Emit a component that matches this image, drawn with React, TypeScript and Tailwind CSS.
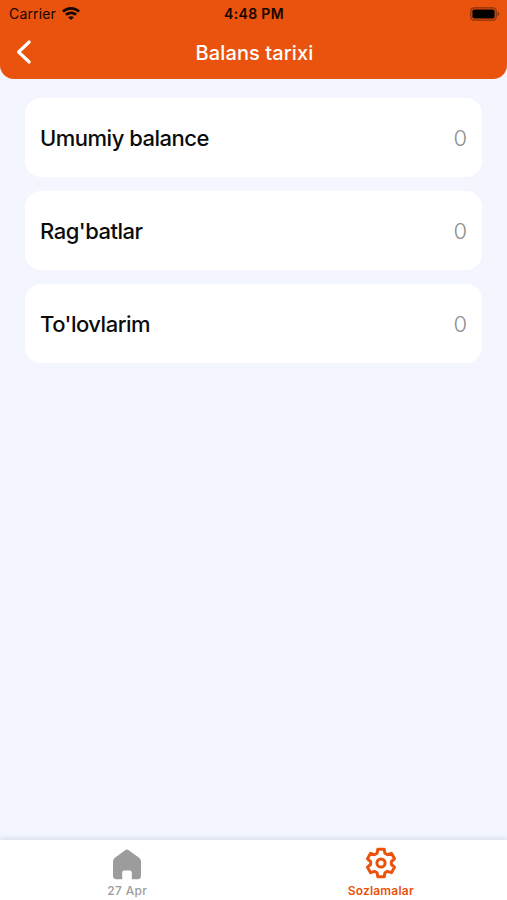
const balanceRows = [
  { id: "total", label: "Umumiy balance", amount: 0 },
  { id: "bonus", label: "Rag'batlar", amount: 0 },
  { id: "payments", label: "To'lovlarim", amount: 0 },
];

function WifiIcon() {
  return (
    <svg width="18" height="14" viewBox="0 0 18 14" fill="none" stroke="#160600" strokeWidth="2.6">
      <path d="M.9 4.6C5.6.3 12.4.3 17.1 4.6" />
      <path d="M3.900 7.800c2.900-2.600 7.300-2.600 10.200 0" />
      <path d="M9 13 6.200 10.300c1.600-1.400 4-1.400 5.600 0z" fill="#160600" stroke="none" />
    </svg>
  );
}

function BatteryIcon() {
  return (
    <svg width="30" height="14" viewBox="0 0 30 14">
      <rect x="0.8" y="0.8" width="25.4" height="12.4" rx="3.5" fill="none" stroke="#87320a" strokeWidth="1.3" />
      <rect x="2.4" y="2.4" width="22.2" height="9.2" rx="1.8" fill="#000" />
      <path d="M27.6 4.8c2.3.6 2.3 3.8 0 4.4z" fill="#87320a" />
    </svg>
  );
}

function HomeIcon() {
  return (
    <svg width="30" height="31" viewBox="0 0 30 31" fill="#9c9c9c">
      <path d="M13.2 1.2q1.8-1.3 3.6 0l10.3 7.6q1.9 1.4 1.9 3.7v14.3q0 3.4-3.4 3.4h-5.8v-6.6q0-2-2-2h-5.6q-2 0-2 2v6.6H4.4Q1 30.2 1 26.8V12.5q0-2.3 1.9-3.7z" />
    </svg>
  );
}

function SettingsIcon() {
  return (
    <svg width="32" height="32" viewBox="-16 -16 32 32" fill="none" stroke="currentColor" strokeWidth="3" strokeLinejoin="round">
      <path d="M-3.2-13.8H3.2L3.9-9.8 6.500-8.300 10.400-9.700 13.500-4.200 10.400-1.500V1.500L13.500 4.200 10.400 9.700 6.500 8.300 3.900 9.800 3.200 13.800H-3.200L-3.900 9.800-6.500 8.300-10.400 9.700-13.500 4.200-10.400 1.500V-1.500L-13.500-4.200-10.400-9.700-6.500-8.300-3.900-9.800Z" />
      <circle r="4.1" />
    </svg>
  );
}

function Header() {
  return (
    <header className="h-[79px] rounded-b-[14px] bg-[#e9530d]">
      {/* Status bar */}
      <div className="grid h-[27px] grid-cols-3 items-center pl-[9px] pr-[7px] text-[#160600]">
        <div className="flex items-center gap-[6px] text-[14px]">
          <span className="tracking-[0.15px]">Carrier</span>
          <WifiIcon />
        </div>
        <span className="pr-[1px] text-center text-[14px] font-semibold tracking-[0.35px]">4:48 PM</span>
        <div className="flex justify-end">
          <BatteryIcon />
        </div>
      </div>

      <div className="grid h-[50px] grid-cols-[48px_1fr_48px] items-center text-white">
        <button className="pl-[16px]" aria-label="Back">
          <svg width="17" height="26" viewBox="0 0 17 26" fill="none" stroke="currentColor" strokeWidth="3.1" strokeLinecap="round" strokeLinejoin="round">
            <path d="M13.2 3 2.6 13 13.2 23" />
          </svg>
        </button>
        <h1 className="pl-[2px] pt-[1px] text-center text-[20px] font-medium tracking-[0.1px]">Balans tarixi</h1>
      </div>
    </header>
  );
}

export default function App() {
  return (
    <div className="flex h-[900px] w-full flex-col bg-[#f3f6ff] font-['Inter','Liberation_Sans',sans-serif]">
      <Header />

      <main className="flex flex-1 flex-col gap-[14px] px-[25px] pt-[19px]">
        {balanceRows.map((row) => (
          <div key={row.id} className="flex h-[79px] items-center justify-between rounded-[16px] bg-white px-[15px] pt-[1px]">
            <span className="text-[22px] font-medium tracking-[-0.5px] text-[#0b0b0b]">{row.label}</span>
            <span className="text-[22px] font-light text-[#8f8f8f]">{row.amount}</span>
          </div>
        ))}
      </main>

      {/* Tab bar */}
      <nav className="grid h-[60px] grid-cols-2 bg-white shadow-[0_-2px_5px_rgba(60,70,110,0.13)]">
        <a className="flex flex-col items-center pt-[9px] pl-[1px] text-[#9c9c9c]">
          <HomeIcon />
          <span className="mt-[3px] text-[12px] leading-[16px] font-medium tracking-[0.3px]">27 Apr</span>
        </a>
        <a className="flex flex-col items-center pt-[7px] pl-[1px] text-[#e9530d]">
          <SettingsIcon />
          <span className="mt-[4px] text-[12px] leading-[16px] font-semibold tracking-[0.2px]">Sozlamalar</span>
        </a>
      </nav>
    </div>
  );
}
